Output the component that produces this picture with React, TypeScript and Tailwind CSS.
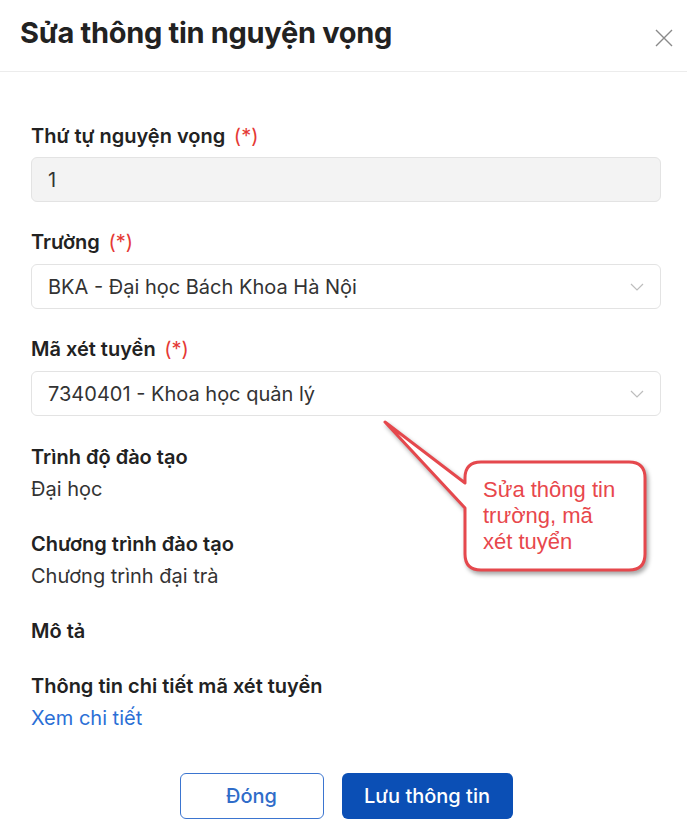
const font = { fontFamily: 'Inter, "Noto Sans", sans-serif' };

function Chevron() {
  return (
    <svg width="14" height="8" viewBox="0 0 14 8" fill="none" className="shrink-0">
      <path d="M1 1l6 6 6-6" stroke="#bdbdbd" strokeWidth="1.2" />
    </svg>
  );
}

function Label({ text, required }: { text: string; required?: boolean }) {
  return (
    <div className="text-[20px] leading-6 font-semibold text-[#222]">
      {text}
      {required && <span className="text-[#e53935] font-normal ml-[3px]"> (*)</span>}
    </div>
  );
}

function Info({ label, value, link }: { label: string; value?: string; link?: boolean }) {
  return (
    <div className="flex flex-col gap-2">
      <Label text={label} />
      {value && (
        <div className={`text-[20px] leading-6 ${link ? 'text-[#2b6fd6]' : 'text-[#333]'}`}>{value}</div>
      )}
    </div>
  );
}

export default function App() {
  return (
    <div className="relative w-[687px] h-[822px] bg-white overflow-hidden" style={font}>
      {/* Header */}
      <div className="h-[72px] flex items-center justify-between pl-5 pr-[11px] border-b border-[#ececec]">
        <h1 className="text-[29px] font-bold text-[#222] tracking-[-0.3px] -mt-[6px]">Sửa thông tin nguyện vọng</h1>
        <button className="w-6 h-6 flex items-center justify-center mt-1">
          <svg width="18" height="18" viewBox="0 0 18 18">
            <path d="M1 1l16 16M17 1L1 17" stroke="#8a8a8a" strokeWidth="1.4" />
          </svg>
        </button>
      </div>

      {/* Body */}
      <div className="px-[31px] pt-[52px] pr-[26px]">
        <div className="flex flex-col gap-7">
          <div className="flex flex-col gap-[9px]">
            <Label text="Thứ tự nguyện vọng" required />
            <div className="h-[45px] rounded-md border border-[#e3e3e3] bg-[#f3f3f3] px-4 flex items-center text-[20px] text-[#333]">
              1
            </div>
          </div>
          <div className="flex flex-col gap-[10px]">
            <Label text="Trường" required />
            <div className="h-[45px] rounded-md border border-[#e3e3e3] bg-white pl-4 pr-4 flex items-center justify-between text-[20px] text-[#333]">
              <span>BKA - Đại học Bách Khoa Hà Nội</span>
              <Chevron />
            </div>
          </div>
          <div className="flex flex-col gap-[10px]">
            <Label text="Mã xét tuyển" required />
            <div className="h-[45px] rounded-md border border-[#e3e3e3] bg-white pl-4 pr-4 flex items-center justify-between text-[20px] text-[#333]">
              <span>7340401 - Khoa học quản lý</span>
              <Chevron />
            </div>
          </div>
        </div>

        <div className="flex flex-col gap-[31px] mt-[29px]">
          <Info label="Trình độ đào tạo" value="Đại học" />
          <Info label="Chương trình đào tạo" value="Chương trình đại trà" />
          <Info label="Mô tả" />
          <Info label="Thông tin chi tiết mã xét tuyển" value="Xem chi tiết" link />
        </div>

        <div className="flex justify-center gap-[18px] mt-[43px]">
          <button className="w-[144px] h-[46px] rounded-md border-[1.5px] border-[#3b75d0] text-[#2f6cc9] text-[20px] font-medium bg-white">
            Đóng
          </button>
          <button className="w-[171px] h-[46px] rounded-md bg-[#0b4fb5] text-white text-[20px] font-medium">
            Lưu thông tin
          </button>
        </div>
      </div>

      {/* Annotation callout */}
      <svg
        className="absolute left-[370px] top-[410px] pointer-events-none"
        width="300"
        height="180"
        viewBox="0 0 300 180"
        style={{ filter: 'drop-shadow(2px 3px 2px rgba(0,0,0,0.35))' }}
      >
        <path
          d="M111 52H259Q275 52 275 68V144Q275 160 259 160H111Q95 160 95 144V98L15 12L95 73V68Q95 52 111 52Z"
          fill="white"
          stroke="#e5484d"
          strokeWidth="3"
          strokeLinejoin="round"
        />
      </svg>
      <div
        className="absolute left-[483px] top-[477px] text-[22px] leading-[26px] text-[#e8474c]"
        style={{ fontFamily: '"Liberation Sans", Arial, sans-serif' }}
      >
        Sửa thông tin
        <br />
        trường, mã
        <br />
        xét tuyển
      </div>
    </div>
  );
}
